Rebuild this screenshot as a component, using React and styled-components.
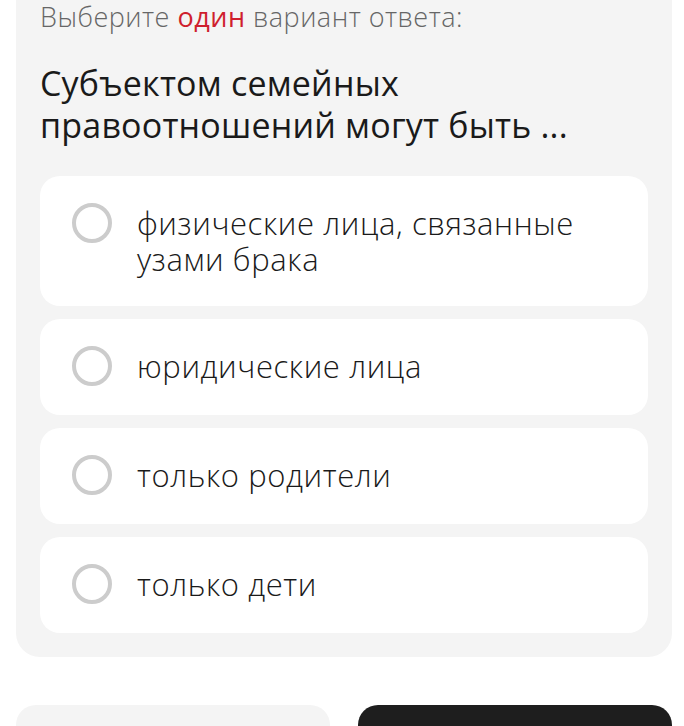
import React from "react";
import styled, { createGlobalStyle } from "styled-components";

const GlobalStyle = createGlobalStyle`
  body {
    margin: 0;
    background: #fff;
    font-family: "Open Sans", "Noto Sans", sans-serif;
  }
`;

const options = [
  "физические лица, связанные узами брака",
  "юридические лица",
  "только родители",
  "только дети",
];

const App = () => {
  return (
    <Page>
      <GlobalStyle />
      <Panel>
        <Hint>
          Выберите <Accent>один</Accent> вариант ответа:
        </Hint>
        <Question>Субъектом семейных правоотношений могут быть ...</Question>
        <OptionList>
          {options.map((o) => (
            <Option key={o}>
              <Radio />
              <OptionText>{o}</OptionText>
            </Option>
          ))}
        </OptionList>
      </Panel>
      <Actions>
        <ActionButton />
        <ActionButton $primary />
      </Actions>
    </Page>
  );
};

export default App;

const Page = styled.div`
  padding: 0 12px 0 16px;
`;

const Panel = styled.div`
  background-color: #f4f4f4;
  border-radius: 0 0 24px 24px;
  padding: 2px 24px 24px;
`;

const Hint = styled.div`
  font-size: 27px;
  line-height: 30px;
  font-weight: 300;
  letter-spacing: 0.5px;
  color: #666;
`;

const Accent = styled.span`
  color: #cf1f2e;
  font-weight: 400;
`;

const Question = styled.h2`
  margin: 30px 0 0;
  font-size: 34px;
  line-height: 42px;
  font-weight: 400;
  letter-spacing: 0.2px;
  color: #1a1a1a;
  max-width: 570px;
`;

const OptionList = styled.div`
  margin-top: 30px;
  display: flex;
  flex-direction: column;
  gap: 13px;
`;

const Option = styled.div`
  display: flex;
  align-items: flex-start;
  gap: 25px;
  background-color: #fff;
  border-radius: 20px;
  padding: 29px 24px 29px 32px;
  cursor: pointer;
`;

const Radio = styled.span`
  flex: none;
  width: 40px;
  height: 40px;
  margin-top: -2px;
  box-sizing: border-box;
  border: 4px solid #cccccc;
  border-radius: 50%;
`;

const OptionText = styled.div`
  font-size: 31px;
  line-height: 36px;
  font-weight: 300;
  letter-spacing: 0.6px;
  color: #1a1a1a;
  max-width: 460px;
`;

const Actions = styled.div`
  margin-top: 48px;
  display: grid;
  grid-template-columns: 1fr 1fr;
  gap: 28px;
`;

const ActionButton = styled.button`
  height: 80px;
  border: none;
  border-radius: 20px;
  background-color: ${(p) => (p.$primary ? "#1e1e1e" : "#f4f4f4")};
`;
